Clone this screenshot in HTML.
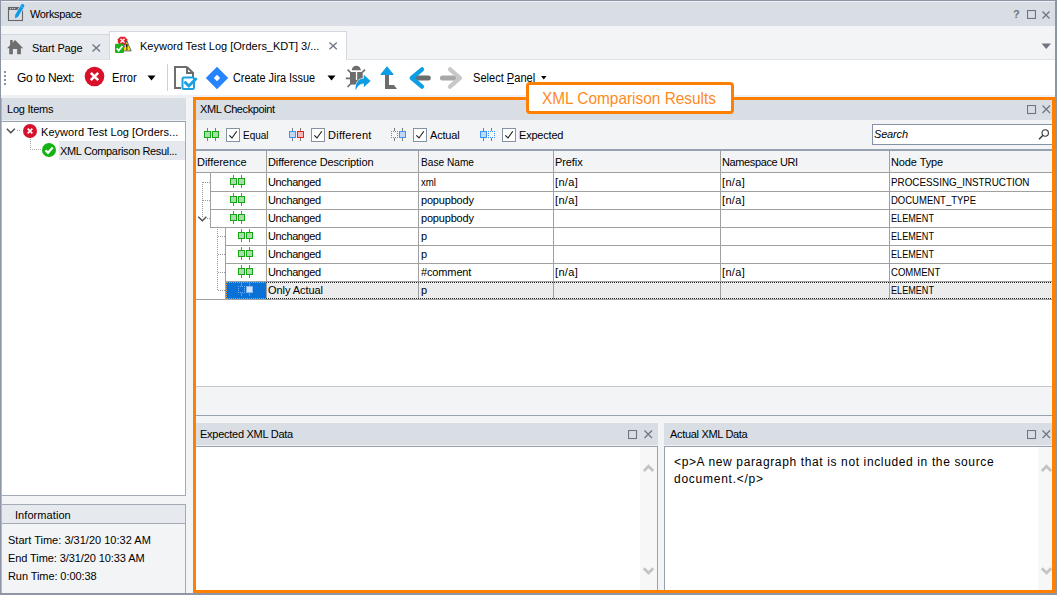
<!DOCTYPE html><html><head><meta charset="utf-8"><style>
html,body{margin:0;padding:0;}
body{width:1057px;height:595px;overflow:hidden;position:relative;font-family:"Liberation Sans",sans-serif;}
body>div,body>svg{position:absolute;}
.t{white-space:nowrap;}
</style></head><body>
<div style="left:0px;top:0px;width:1057px;height:595px;background:#f3f4f6;"></div>
<div style="left:0px;top:0px;width:1057px;height:26px;background:#d9dde4;"></div>
<div style="left:0px;top:0px;width:1057px;height:1px;background:#8e96a5;"></div>
<div style="left:1px;top:1px;width:1055px;height:1px;background:#eef0f3;"></div>
<div style="left:0px;top:26px;width:1057px;height:34px;background:#f3f4f6;"></div>
<div style="left:1px;top:34px;width:108px;height:25px;background:#e6e9ee;border-top:1px solid #d3d7de;box-sizing:border-box"></div>
<div style="left:109px;top:31px;width:238px;height:29px;background:#ffffff;border:1px solid #d5d9df;border-bottom:none;box-sizing:border-box"></div>
<div style="left:347px;top:59px;width:710px;height:1px;background:#dfe2e7;"></div>
<div style="left:1px;top:59px;width:108px;height:1px;background:#dfe2e7;"></div>
<div style="left:1px;top:60px;width:1055px;height:35px;background:#ffffff;"></div>
<div style="left:1px;top:95px;width:1055px;height:3px;background:#eef0f3;"></div>
<div style="left:0px;top:0px;width:1px;height:595px;background:#8e96a5;"></div>
<div style="left:1055px;top:0px;width:2px;height:595px;background:#8e96a5;"></div>
<div style="left:0px;top:593px;width:1057px;height:2px;background:#8e96a5;"></div>
<svg style="left:4px;top:2px" width="26" height="22" viewBox="0 0 26 22"><rect x="4.5" y="5.5" width="14" height="13" fill="none" stroke="#666" stroke-width="1.1"></rect><rect x="4" y="5" width="15" height="3" fill="#666"></rect><circle cx="6.6" cy="6.6" r=".65" fill="#ddd"></circle><circle cx="8.6" cy="6.6" r=".65" fill="#ddd"></circle><circle cx="10.6" cy="6.6" r=".65" fill="#ddd"></circle><path d="M17.54 2.32 Q19.8 1.1 20.46 4.08 L14.06 14.68 L11.1 16.6 L11.14 12.92 Z" fill="#0d9be6" stroke="#d9dde4" stroke-width="1.4"></path><path d="M17.54 2.32 Q19.8 1.1 20.46 4.08 L14.06 14.68 L11.1 16.6 L11.14 12.92 Z" fill="#0d9be6"></path><path d="M16.4 4.1 L19.5 5.9" stroke="#7cc8f0" stroke-width=".6"></path></svg>
<div class="t" style="left: 30px; top: 9px; font-size: 11px; line-height: 11px; color: rgb(0, 0, 0); letter-spacing: -0.354px;">Workspace</div>
<div class="t" style="left:1013px;top:9px;font-size:11px;line-height:11px;color:#6e7480;font-weight:bold">?</div>
<svg style="left:1027px;top:10px" width="9" height="9" viewBox="0 0 9 9"><rect x="0.5" y="0.5" width="8" height="8" fill="none" stroke="#6e7480" stroke-width="1.2"></rect></svg>
<svg style="left:1042px;top:11px" width="8" height="8" viewBox="0 0 8 8"><path d="M0.5 0.5 L7.5 7.5 M7.5 0.5 L0.5 7.5" stroke="#6e7480" stroke-width="1.3"></path></svg>
<svg style="left:4px;top:36px" width="22" height="22" viewBox="0 0 22 22"><path d="M3 12.2 L11.1 4.1 L19.2 12.2 L16.9 12.2 L16.9 18.3 L13.1 18.3 L13.1 13 L8.9 13 L8.9 18.3 L5.2 18.3 L5.2 12.2 Z" fill="#6f6f6f"></path><rect x="6.1" y="4" width="2.6" height="6" fill="#6f6f6f"></rect></svg>
<div class="t" style="left: 32px; top: 43px; font-size: 11px; line-height: 11px; color: rgb(0, 0, 0); letter-spacing: -0.143px;">Start Page</div>
<svg style="left:92px;top:44px" width="9" height="8" viewBox="0 0 9 8"><path d="M0.5 0.5 L8 7.5 M8 0.5 L0.5 7.5" stroke="#6e7480" stroke-width="1.3"></path></svg>
<svg style="left:114px;top:36px" width="18" height="18" viewBox="0 0 18 18"><path d="M6.2 0.8 L10.8 0.8 L13.2 3.2 L13.2 6.6 L10.8 9 L6.2 9 L3.8 6.6 L3.8 3.2 Z" fill="#e0202a"></path><path d="M6.5 2.7 L10.5 6.7 M10.5 2.7 L6.5 6.7" stroke="#fff" stroke-width="1.3"></path><path d="M12.8 4.8 L17.2 14.9 L8.5 14.9 Z" fill="#f8e40c" stroke="#44448a" stroke-width=".8" stroke-linejoin="round"></path><rect x="12.2" y="8" width="1.3" height="3.6" fill="#000"></rect><rect x="12.2" y="12.4" width="1.3" height="1.3" fill="#000"></rect><rect x="1" y="7.8" width="9" height="9.2" rx="1.2" fill="#1bb21b"></rect><path d="M2.7 12.2 L4.7 14.6 L8.4 10" stroke="#fff" stroke-width="1.7" fill="none"></path></svg>
<div class="t" style="left: 140px; top: 41px; font-size: 11px; line-height: 11px; color: rgb(0, 0, 0); letter-spacing: -0.004px;">Keyword Test Log [Orders_KDT] 3/...</div>
<svg style="left:329px;top:42px" width="9" height="8" viewBox="0 0 9 8"><path d="M0.5 0.5 L7.8 7.2 M7.8 0.5 L0.5 7.2" stroke="#6e7480" stroke-width="1.3"></path></svg>
<svg style="left:1041px;top:43px" width="11" height="7" viewBox="0 0 11 7"><path d="M0.5 0.5 L10 0.5 L5.25 6 Z" fill="#6e7480"></path></svg>
<div style="left:4px;top:71px;width:2px;height:2px;background:#8a8f98;"></div>
<div style="left:4px;top:75px;width:2px;height:2px;background:#8a8f98;"></div>
<div style="left:4px;top:79px;width:2px;height:2px;background:#8a8f98;"></div>
<div style="left:4px;top:83px;width:2px;height:2px;background:#8a8f98;"></div>
<div class="t" style="left: 17px; top: 72px; font-size: 12px; line-height: 12px; color: rgb(0, 0, 0); letter-spacing: -0.3px;">Go to Next:</div>
<svg style="left:84px;top:66px" width="21" height="21" viewBox="0 0 21 21"><circle cx="10.5" cy="10.5" r="9.8" fill="#d7102b"></circle><path d="M6.8 6.8 L14.2 14.2 M14.2 6.8 L6.8 14.2" stroke="#fff" stroke-width="2.6"></path></svg>
<div class="t" style="left: 112px; top: 72px; font-size: 12px; line-height: 12px; color: rgb(0, 0, 0); letter-spacing: 0px; transform-origin: 0px 0px; transform: scaleX(0.9223);">Error</div>
<svg style="left:147px;top:75px" width="9" height="6" viewBox="0 0 9 6"><path d="M0.5 0.5 L8.5 0.5 L4.5 5.5 Z" fill="#000"></path></svg>
<div style="left:167px;top:64px;width:1px;height:27px;background:#d0d0d0;"></div>
<svg style="left:172px;top:64px" width="26" height="27" viewBox="0 0 26 27"><path d="M15 3 L3 3 L3 24 L9 24" fill="none" stroke="#6d6d6d" stroke-width="2"></path><path d="M15 3 L15 9 L21 9 L21 13 M15 3 L21 9" fill="none" stroke="#6d6d6d" stroke-width="2"></path><rect x="10.5" y="13.4" width="11.5" height="11.5" rx="1.5" fill="#fff" stroke="#1ba1e2" stroke-width="2"></rect><path d="M13.3 18.5 L16.8 22 L23.8 15" stroke="#1ba1e2" stroke-width="3" fill="none" stroke-linecap="round"></path></svg>
<svg style="left:205px;top:66px" width="24" height="24" viewBox="0 0 24 24"><path d="M12 0.8 L23.2 12 L12 23.2 L0.8 12 Z" fill="#2684ff"></path><path d="M12 8.8 L15.2 12 L12 15.2 L8.8 12 Z" fill="#fff"></path></svg>
<div class="t" style="left: 233px; top: 72px; font-size: 12px; line-height: 12px; color: rgb(0, 0, 0); letter-spacing: 0px; transform-origin: 0px 0px; transform: scaleX(0.904);">Create Jira Issue</div>
<svg style="left:327px;top:75px" width="9" height="6" viewBox="0 0 9 6"><path d="M0.5 0.5 L8.5 0.5 L4.5 5.5 Z" fill="#000"></path></svg>
<svg style="left:345px;top:65px" width="27" height="27" viewBox="0 0 27 27"><path d="M6.8 5.3 A4.5 4.5 0 0 1 15.8 5.3 Z" fill="#6d6d6d"></path><rect x="5" y="7" width="12.7" height="12.6" fill="#6d6d6d"></rect><rect x="10.9" y="7" width="1.3" height="8" fill="#fff"></rect><path d="M2.6 4.6 L5.5 7.5 M20 4.6 L17.2 7.5 M0.8 13.3 L5 13.3 M2.6 22 L5.5 19" stroke="#6d6d6d" stroke-width="1.7"></path><path d="M10.6 25.6 C10.2 18 13.2 13.6 18.8 13.6 L18.8 9.8 L25.6 16 L18.8 22.2 L18.8 18.6 C15 18.6 12.6 21 10.6 25.6 Z" fill="#0c9ee5" stroke="#fff" stroke-width="1.2" paint-order="stroke"></path></svg>
<svg style="left:380px;top:66px" width="18" height="24" viewBox="0 0 18 24"><path d="M7 1 L13 8.5 L1 8.5 Z" fill="#0c9ee5" stroke="#0c9ee5" stroke-width="1.2" stroke-linejoin="round"></path><path d="M5 9 L9 9 L9 19 L14 19 L17 23 L5 23 Z" fill="#6d6d6d"></path></svg>
<svg style="left:407px;top:66px" width="26" height="24" viewBox="0 0 26 24"><path d="M10 12 L21.3 12" stroke="#6d6d6d" stroke-width="5" stroke-linecap="round"></path><path d="M15 3.3 L4.8 12 L15 20.7" fill="none" stroke="#0c9ee5" stroke-width="4.3" stroke-linecap="round" stroke-linejoin="round"></path></svg>
<svg style="left:438px;top:66px" width="26" height="24" viewBox="0 0 26 24"><path d="M4.4 12 L16 12" stroke="#a8a8a8" stroke-width="5" stroke-linecap="round"></path><path d="M12 3.3 L22 12 L12 20.7" fill="none" stroke="#c8c8c8" stroke-width="4.3" stroke-linecap="round" stroke-linejoin="round"></path></svg>
<div class="t" style="left: 473px; top: 72px; font-size: 12px; line-height: 12px; color: rgb(0, 0, 0); letter-spacing: 0px; transform-origin: 0px 0px; transform: scaleX(0.923);">Select Panel</div>
<div style="left:507px;top:83px;width:7px;height:1px;background:#000;"></div>
<svg style="left:541px;top:76px" width="6" height="4" viewBox="0 0 6 4"><path d="M0 0 L5.5 0 L2.75 3.5 Z" fill="#000"></path></svg>
<div style="left:1px;top:98px;width:185px;height:22px;background:#d9dde4;"></div>
<div class="t" style="left: 7px; top: 104px; font-size: 11px; line-height: 11px; color: rgb(0, 0, 0); letter-spacing: -0.227px;">Log Items</div>
<div style="left:1px;top:120px;width:185px;height:1px;background:#eef0f3;"></div>
<div style="left:1px;top:121px;width:185px;height:1px;background:#98a1af;"></div>
<div style="left:1px;top:122px;width:185px;height:374px;background:#ffffff;border-right:1px solid #a3aab6;border-bottom:1px solid #a3aab6;box-sizing:border-box"></div>
<svg style="left:6px;top:128px" width="10" height="7" viewBox="0 0 10 7"><path d="M0.8 0.8 L4.8 4.8 L8.8 0.8" fill="none" stroke="#4a4a4a" stroke-width="1.4"></path></svg>
<svg style="left:16px;top:129px" width="6" height="3" viewBox="0 0 6 3"><rect x="1" y="1" width="1" height="1" fill="#aaa"></rect><rect x="3" y="1" width="1" height="1" fill="#aaa"></rect></svg>
<svg style="left:23px;top:124px" width="15" height="15" viewBox="0 0 15 15"><circle cx="7" cy="7" r="7" fill="#d7102b"></circle><path d="M4.7 4.7 L9.3 9.3 M9.3 4.7 L4.7 9.3" stroke="#fff" stroke-width="1.7"></path></svg>
<div class="t" style="left: 41px; top: 127px; font-size: 11px; line-height: 11px; color: rgb(0, 0, 0); letter-spacing: 0.045px;">Keyword Test Log [Orders...</div>
<svg style="left:29px;top:138px" width="13" height="13" viewBox="0 0 13 13"><path d="M1.5 1 V11.5 H12" fill="none" stroke="#aaa" stroke-width="1" stroke-dasharray="1 1"></path></svg>
<div style="left:59px;top:141px;width:126px;height:19px;background:#e5e8ec;"></div>
<svg style="left:42px;top:143px" width="15" height="15" viewBox="0 0 15 15"><circle cx="7" cy="7" r="7" fill="#12b312"></circle><path d="M3.5 7.3 L6 9.8 L10.7 4.6" stroke="#fff" stroke-width="2.2" fill="none"></path></svg>
<div class="t" style="left: 60px; top: 146px; font-size: 11px; line-height: 11px; color: rgb(0, 0, 0); letter-spacing: -0.342px;">XML Comparison Resul...</div>
<div style="left:1px;top:504px;width:185px;height:20px;background:#e6e9ee;border-top:1px solid #a3aab6;border-right:1px solid #a3aab6;border-bottom:1px solid #a3aab6;box-sizing:border-box"></div>
<div style="left:1px;top:524px;width:185px;height:69px;background:#f3f4f6;border-right:1px solid #a3aab6;box-sizing:border-box"></div>
<div class="t" style="left: 15px; top: 510px; font-size: 11px; line-height: 11px; color: rgb(0, 0, 0); letter-spacing: 0.067px;">Information</div>
<div class="t" style="left: 8px; top: 535px; font-size: 11px; line-height: 11px; color: rgb(0, 0, 0); letter-spacing: 0.012px;">Start Time: 3/31/20 10:32 AM</div>
<div class="t" style="left: 8px; top: 553px; font-size: 11px; line-height: 11px; color: rgb(0, 0, 0); letter-spacing: -0.085px;">End Time: 3/31/20 10:33 AM</div>
<div class="t" style="left: 8px; top: 571px; font-size: 11px; line-height: 11px; color: rgb(0, 0, 0); letter-spacing: -0.081px;">Run Time: 0:00:38</div>
<div style="left:1px;top:98px;width:1px;height:495px;background:#b4bac5;"></div>
<div style="left:196px;top:100px;width:856px;height:20px;background:#d9dde4;"></div>
<div class="t" style="left: 200px; top: 104px; font-size: 11px; line-height: 11px; color: rgb(0, 0, 0); letter-spacing: -0.409px;">XML Checkpoint</div>
<svg style="left:1027px;top:105px" width="10" height="10" viewBox="0 0 10 10"><rect x="0.5" y="0.5" width="8" height="8" fill="none" stroke="#6e7480" stroke-width="1.1"></rect></svg>
<svg style="left:1042px;top:105px" width="9" height="9" viewBox="0 0 9 9"><path d="M0.5 0.5 L8 8 M8 0.5 L0.5 8" stroke="#6e7480" stroke-width="1.2"></path></svg>
<div style="left:196px;top:120px;width:856px;height:29px;background:#f3f4f6;"></div>
<svg style="left:204px;top:128px" width="15" height="13" viewBox="0 0 15 13"><rect x="3" y="0" width="1" height="13" fill="#7a7a7a"></rect><rect x="11" y="0" width="1" height="13" fill="#7a7a7a"></rect><rect x="0.5" y="3.5" width="6" height="6" fill="#a8dca8" stroke="#14a814" stroke-width="1"></rect><rect x="8.5" y="3.5" width="6" height="6" fill="#a8dca8" stroke="#14a814" stroke-width="1"></rect></svg>
<svg style="left:226px;top:128px" width="14" height="14" viewBox="0 0 14 14"><rect x="0.5" y="0.5" width="13" height="13" fill="#fff" stroke="#8592a6" stroke-width="1"></rect><path d="M3.3 7.3 L6 10 L10.8 3.2" fill="none" stroke="#1a1a1a" stroke-width="1.1"></path></svg>
<div class="t" style="left: 243px; top: 130px; font-size: 11px; line-height: 11px; color: rgb(0, 0, 0); letter-spacing: 0px; transform-origin: 0px 0px; transform: scaleX(0.9097);">Equal</div>
<svg style="left:289px;top:128px" width="15" height="13" viewBox="0 0 15 13"><rect x="3" y="0" width="1" height="13" fill="#7a7a7a"></rect><rect x="11" y="0" width="1" height="13" fill="#7a7a7a"></rect><rect x="0.5" y="3.5" width="6" height="6" fill="#c0d8f4" stroke="#3a96ff" stroke-width="1"></rect><rect x="8.5" y="3.5" width="6" height="6" fill="#f4b8b8" stroke="#ee1c24" stroke-width="1"></rect></svg>
<svg style="left:311px;top:128px" width="14" height="14" viewBox="0 0 14 14"><rect x="0.5" y="0.5" width="13" height="13" fill="#fff" stroke="#8592a6" stroke-width="1"></rect><path d="M3.3 7.3 L6 10 L10.8 3.2" fill="none" stroke="#1a1a1a" stroke-width="1.1"></path></svg>
<div class="t" style="left: 328px; top: 130px; font-size: 11px; line-height: 11px; color: rgb(0, 0, 0); letter-spacing: 0.253px;">Different</div>
<svg style="left:391px;top:128px" width="15" height="13" viewBox="0 0 15 13"><rect x="3" y="0" width="1" height="13" fill="#7a7a7a"></rect><rect x="11" y="0" width="1" height="13" fill="#7a7a7a"></rect><rect x="0" y="3" width="7" height="7" fill="#f3f4f6"></rect><rect x="0" y="3" width="1" height="1" fill="#3a96ff"></rect><rect x="2" y="3" width="1" height="1" fill="#3a96ff"></rect><rect x="4" y="3" width="1" height="1" fill="#3a96ff"></rect><rect x="6" y="3" width="1" height="1" fill="#3a96ff"></rect><rect x="0" y="5" width="1" height="1" fill="#3a96ff"></rect><rect x="6" y="5" width="1" height="1" fill="#3a96ff"></rect><rect x="0" y="7" width="1" height="1" fill="#3a96ff"></rect><rect x="6" y="7" width="1" height="1" fill="#3a96ff"></rect><rect x="0" y="9" width="1" height="1" fill="#3a96ff"></rect><rect x="2" y="9" width="1" height="1" fill="#3a96ff"></rect><rect x="4" y="9" width="1" height="1" fill="#3a96ff"></rect><rect x="6" y="9" width="1" height="1" fill="#3a96ff"></rect><rect x="8.5" y="3.5" width="6" height="6" fill="#c0d8f4" stroke="#3a96ff" stroke-width="1"></rect></svg>
<svg style="left:413px;top:128px" width="14" height="14" viewBox="0 0 14 14"><rect x="0.5" y="0.5" width="13" height="13" fill="#fff" stroke="#8592a6" stroke-width="1"></rect><path d="M3.3 7.3 L6 10 L10.8 3.2" fill="none" stroke="#1a1a1a" stroke-width="1.1"></path></svg>
<div class="t" style="left: 430px; top: 130px; font-size: 11px; line-height: 11px; color: rgb(0, 0, 0); letter-spacing: -0.176px;">Actual</div>
<svg style="left:480px;top:128px" width="15" height="13" viewBox="0 0 15 13"><rect x="3" y="0" width="1" height="13" fill="#7a7a7a"></rect><rect x="11" y="0" width="1" height="13" fill="#7a7a7a"></rect><rect x="0.5" y="3.5" width="6" height="6" fill="#c0d8f4" stroke="#3a96ff" stroke-width="1"></rect><rect x="8" y="3" width="7" height="7" fill="#f3f4f6"></rect><rect x="8" y="3" width="1" height="1" fill="#3a96ff"></rect><rect x="10" y="3" width="1" height="1" fill="#3a96ff"></rect><rect x="12" y="3" width="1" height="1" fill="#3a96ff"></rect><rect x="14" y="3" width="1" height="1" fill="#3a96ff"></rect><rect x="8" y="5" width="1" height="1" fill="#3a96ff"></rect><rect x="14" y="5" width="1" height="1" fill="#3a96ff"></rect><rect x="8" y="7" width="1" height="1" fill="#3a96ff"></rect><rect x="14" y="7" width="1" height="1" fill="#3a96ff"></rect><rect x="8" y="9" width="1" height="1" fill="#3a96ff"></rect><rect x="10" y="9" width="1" height="1" fill="#3a96ff"></rect><rect x="12" y="9" width="1" height="1" fill="#3a96ff"></rect><rect x="14" y="9" width="1" height="1" fill="#3a96ff"></rect></svg>
<svg style="left:502px;top:128px" width="14" height="14" viewBox="0 0 14 14"><rect x="0.5" y="0.5" width="13" height="13" fill="#fff" stroke="#8592a6" stroke-width="1"></rect><path d="M3.3 7.3 L6 10 L10.8 3.2" fill="none" stroke="#1a1a1a" stroke-width="1.1"></path></svg>
<div class="t" style="left: 519px; top: 130px; font-size: 11px; line-height: 11px; color: rgb(0, 0, 0); letter-spacing: -0.196px;">Expected</div>
<div style="left:872px;top:124px;width:180px;height:21px;background:#ffffff;border:1px solid #8592a6;border-right:none;box-sizing:border-box"></div>
<div class="t" style="left: 874px; top: 129px; font-size: 11px; line-height: 11px; color: rgb(0, 0, 0); font-style: italic; letter-spacing: -0.172px;">Search</div>
<svg style="left:1038px;top:129px" width="12" height="11" viewBox="0 0 12 11"><circle cx="7.2" cy="4" r="3.2" fill="none" stroke="#333" stroke-width="1.1"></circle><path d="M5 6.3 L1 10.2" stroke="#333" stroke-width="1.5"></path></svg>
<div style="left:196px;top:149px;width:856px;height:2px;background:#98a1af;"></div>
<div style="left:196px;top:151px;width:856px;height:21px;background:#f3f4f6;"></div>
<div style="left:196px;top:172px;width:856px;height:1px;background:#a0a0a0;"></div>
<div style="left:266px;top:151px;width:1px;height:148px;background:#a0a0a0;"></div>
<div style="left:418px;top:151px;width:1px;height:148px;background:#a0a0a0;"></div>
<div style="left:553px;top:151px;width:1px;height:148px;background:#a0a0a0;"></div>
<div style="left:720px;top:151px;width:1px;height:148px;background:#a0a0a0;"></div>
<div style="left:889px;top:151px;width:1px;height:148px;background:#a0a0a0;"></div>
<div class="t" style="left: 197px; top: 157px; font-size: 11px; line-height: 11px; color: rgb(0, 0, 0); letter-spacing: -0.037px;">Difference</div>
<div class="t" style="left: 268px; top: 157px; font-size: 11px; line-height: 11px; color: rgb(0, 0, 0); letter-spacing: -0.12px;">Difference Description</div>
<div class="t" style="left: 421px; top: 157px; font-size: 11px; line-height: 11px; color: rgb(0, 0, 0); letter-spacing: 0px; transform-origin: 0px 0px; transform: scaleX(0.922);">Base Name</div>
<div class="t" style="left: 555px; top: 157px; font-size: 11px; line-height: 11px; color: rgb(0, 0, 0); letter-spacing: -0.085px;">Prefix</div>
<div class="t" style="left: 722px; top: 157px; font-size: 11px; line-height: 11px; color: rgb(0, 0, 0); letter-spacing: -0.384px;">Namespace URI</div>
<div class="t" style="left: 891px; top: 157px; font-size: 11px; line-height: 11px; color: rgb(0, 0, 0); letter-spacing: -0.102px;">Node Type</div>
<div style="left:196px;top:173px;width:856px;height:213px;background:#ffffff;"></div>
<div style="left:196px;top:172px;width:856px;height:1px;background:#a0a0a0;"></div>
<div style="left:266px;top:173px;width:1px;height:19px;background:#a0a0a0;"></div>
<div style="left:418px;top:173px;width:1px;height:19px;background:#a0a0a0;"></div>
<div style="left:553px;top:173px;width:1px;height:19px;background:#a0a0a0;"></div>
<div style="left:720px;top:173px;width:1px;height:19px;background:#a0a0a0;"></div>
<div style="left:889px;top:173px;width:1px;height:19px;background:#a0a0a0;"></div>
<div style="left:210px;top:191px;width:842px;height:1px;background:#a0a0a0;"></div>
<div style="left:210px;top:173px;width:1px;height:19px;background:#a0a0a0;"></div>
<svg style="left:230px;top:175px" width="15" height="13" viewBox="0 0 15 13"><rect x="3" y="0" width="1" height="13" fill="#7a7a7a"></rect><rect x="11" y="0" width="1" height="13" fill="#7a7a7a"></rect><rect x="0.5" y="3.5" width="6" height="6" fill="#a8dca8" stroke="#14a814"></rect><rect x="8.5" y="3.5" width="6" height="6" fill="#a8dca8" stroke="#14a814"></rect></svg>
<div class="t" style="left: 268px; top: 177px; font-size: 11px; line-height: 11px; color: rgb(0, 0, 0); letter-spacing: -0.385px;">Unchanged</div>
<div class="t" style="left: 421px; top: 177px; font-size: 11px; line-height: 11px; color: rgb(0, 0, 0); letter-spacing: 0px; transform-origin: 0px 0px; transform: scaleX(0.8767);">xml</div>
<div class="t" style="left: 555px; top: 177px; font-size: 11px; line-height: 11px; color: rgb(0, 0, 0); letter-spacing: 0.323px;">[n/a]</div>
<div class="t" style="left: 722px; top: 177px; font-size: 11px; line-height: 11px; color: rgb(0, 0, 0); letter-spacing: 0.323px;">[n/a]</div>
<div class="t" style="left: 891px; top: 177px; font-size: 11px; line-height: 11px; color: rgb(0, 0, 0); letter-spacing: 0px; transform-origin: 0px 0px; transform: scaleX(0.8956);">PROCESSING_INSTRUCTION</div>
<div style="left:266px;top:191px;width:1px;height:19px;background:#a0a0a0;"></div>
<div style="left:418px;top:191px;width:1px;height:19px;background:#a0a0a0;"></div>
<div style="left:553px;top:191px;width:1px;height:19px;background:#a0a0a0;"></div>
<div style="left:720px;top:191px;width:1px;height:19px;background:#a0a0a0;"></div>
<div style="left:889px;top:191px;width:1px;height:19px;background:#a0a0a0;"></div>
<div style="left:210px;top:209px;width:842px;height:1px;background:#a0a0a0;"></div>
<div style="left:210px;top:191px;width:1px;height:19px;background:#a0a0a0;"></div>
<svg style="left:230px;top:193px" width="15" height="13" viewBox="0 0 15 13"><rect x="3" y="0" width="1" height="13" fill="#7a7a7a"></rect><rect x="11" y="0" width="1" height="13" fill="#7a7a7a"></rect><rect x="0.5" y="3.5" width="6" height="6" fill="#a8dca8" stroke="#14a814"></rect><rect x="8.5" y="3.5" width="6" height="6" fill="#a8dca8" stroke="#14a814"></rect></svg>
<div class="t" style="left: 268px; top: 195px; font-size: 11px; line-height: 11px; color: rgb(0, 0, 0); letter-spacing: -0.385px;">Unchanged</div>
<div class="t" style="left: 421px; top: 195px; font-size: 11px; line-height: 11px; color: rgb(0, 0, 0); letter-spacing: -0.182px;">popupbody</div>
<div class="t" style="left: 555px; top: 195px; font-size: 11px; line-height: 11px; color: rgb(0, 0, 0); letter-spacing: 0.323px;">[n/a]</div>
<div class="t" style="left: 722px; top: 195px; font-size: 11px; line-height: 11px; color: rgb(0, 0, 0); letter-spacing: 0.323px;">[n/a]</div>
<div class="t" style="left: 891px; top: 195px; font-size: 11px; line-height: 11px; color: rgb(0, 0, 0); letter-spacing: 0px; transform-origin: 0px 0px; transform: scaleX(0.8638);">DOCUMENT_TYPE</div>
<div style="left:266px;top:209px;width:1px;height:19px;background:#a0a0a0;"></div>
<div style="left:418px;top:209px;width:1px;height:19px;background:#a0a0a0;"></div>
<div style="left:553px;top:209px;width:1px;height:19px;background:#a0a0a0;"></div>
<div style="left:720px;top:209px;width:1px;height:19px;background:#a0a0a0;"></div>
<div style="left:889px;top:209px;width:1px;height:19px;background:#a0a0a0;"></div>
<div style="left:210px;top:227px;width:842px;height:1px;background:#a0a0a0;"></div>
<div style="left:210px;top:209px;width:1px;height:19px;background:#a0a0a0;"></div>
<svg style="left:230px;top:211px" width="15" height="13" viewBox="0 0 15 13"><rect x="3" y="0" width="1" height="13" fill="#7a7a7a"></rect><rect x="11" y="0" width="1" height="13" fill="#7a7a7a"></rect><rect x="0.5" y="3.5" width="6" height="6" fill="#a8dca8" stroke="#14a814"></rect><rect x="8.5" y="3.5" width="6" height="6" fill="#a8dca8" stroke="#14a814"></rect></svg>
<div class="t" style="left: 268px; top: 213px; font-size: 11px; line-height: 11px; color: rgb(0, 0, 0); letter-spacing: -0.385px;">Unchanged</div>
<div class="t" style="left: 421px; top: 213px; font-size: 11px; line-height: 11px; color: rgb(0, 0, 0); letter-spacing: -0.182px;">popupbody</div>
<div class="t" style="left: 891px; top: 213px; font-size: 11px; line-height: 11px; color: rgb(0, 0, 0); letter-spacing: 0px; transform-origin: 0px 0px; transform: scaleX(0.8274);">ELEMENT</div>
<div style="left:266px;top:227px;width:1px;height:19px;background:#a0a0a0;"></div>
<div style="left:418px;top:227px;width:1px;height:19px;background:#a0a0a0;"></div>
<div style="left:553px;top:227px;width:1px;height:19px;background:#a0a0a0;"></div>
<div style="left:720px;top:227px;width:1px;height:19px;background:#a0a0a0;"></div>
<div style="left:889px;top:227px;width:1px;height:19px;background:#a0a0a0;"></div>
<div style="left:225px;top:245px;width:827px;height:1px;background:#a0a0a0;"></div>
<div style="left:225px;top:227px;width:1px;height:19px;background:#a0a0a0;"></div>
<svg style="left:238px;top:229px" width="15" height="13" viewBox="0 0 15 13"><rect x="3" y="0" width="1" height="13" fill="#7a7a7a"></rect><rect x="11" y="0" width="1" height="13" fill="#7a7a7a"></rect><rect x="0.5" y="3.5" width="6" height="6" fill="#a8dca8" stroke="#14a814"></rect><rect x="8.5" y="3.5" width="6" height="6" fill="#a8dca8" stroke="#14a814"></rect></svg>
<div class="t" style="left: 268px; top: 231px; font-size: 11px; line-height: 11px; color: rgb(0, 0, 0); letter-spacing: -0.385px;">Unchanged</div>
<div class="t" style="left:421px;top:231px;font-size:11px;line-height:11px;color:#000;">p</div>
<div class="t" style="left: 891px; top: 231px; font-size: 11px; line-height: 11px; color: rgb(0, 0, 0); letter-spacing: 0px; transform-origin: 0px 0px; transform: scaleX(0.8274);">ELEMENT</div>
<div style="left:266px;top:245px;width:1px;height:19px;background:#a0a0a0;"></div>
<div style="left:418px;top:245px;width:1px;height:19px;background:#a0a0a0;"></div>
<div style="left:553px;top:245px;width:1px;height:19px;background:#a0a0a0;"></div>
<div style="left:720px;top:245px;width:1px;height:19px;background:#a0a0a0;"></div>
<div style="left:889px;top:245px;width:1px;height:19px;background:#a0a0a0;"></div>
<div style="left:225px;top:263px;width:827px;height:1px;background:#a0a0a0;"></div>
<div style="left:225px;top:245px;width:1px;height:19px;background:#a0a0a0;"></div>
<svg style="left:238px;top:247px" width="15" height="13" viewBox="0 0 15 13"><rect x="3" y="0" width="1" height="13" fill="#7a7a7a"></rect><rect x="11" y="0" width="1" height="13" fill="#7a7a7a"></rect><rect x="0.5" y="3.5" width="6" height="6" fill="#a8dca8" stroke="#14a814"></rect><rect x="8.5" y="3.5" width="6" height="6" fill="#a8dca8" stroke="#14a814"></rect></svg>
<div class="t" style="left: 268px; top: 249px; font-size: 11px; line-height: 11px; color: rgb(0, 0, 0); letter-spacing: -0.385px;">Unchanged</div>
<div class="t" style="left:421px;top:249px;font-size:11px;line-height:11px;color:#000;">p</div>
<div class="t" style="left: 891px; top: 249px; font-size: 11px; line-height: 11px; color: rgb(0, 0, 0); letter-spacing: 0px; transform-origin: 0px 0px; transform: scaleX(0.8274);">ELEMENT</div>
<div style="left:266px;top:263px;width:1px;height:19px;background:#a0a0a0;"></div>
<div style="left:418px;top:263px;width:1px;height:19px;background:#a0a0a0;"></div>
<div style="left:553px;top:263px;width:1px;height:19px;background:#a0a0a0;"></div>
<div style="left:720px;top:263px;width:1px;height:19px;background:#a0a0a0;"></div>
<div style="left:889px;top:263px;width:1px;height:19px;background:#a0a0a0;"></div>
<div style="left:225px;top:281px;width:827px;height:1px;background:#a0a0a0;"></div>
<div style="left:225px;top:263px;width:1px;height:19px;background:#a0a0a0;"></div>
<svg style="left:238px;top:265px" width="15" height="13" viewBox="0 0 15 13"><rect x="3" y="0" width="1" height="13" fill="#7a7a7a"></rect><rect x="11" y="0" width="1" height="13" fill="#7a7a7a"></rect><rect x="0.5" y="3.5" width="6" height="6" fill="#a8dca8" stroke="#14a814"></rect><rect x="8.5" y="3.5" width="6" height="6" fill="#a8dca8" stroke="#14a814"></rect></svg>
<div class="t" style="left: 268px; top: 267px; font-size: 11px; line-height: 11px; color: rgb(0, 0, 0); letter-spacing: -0.385px;">Unchanged</div>
<div class="t" style="left: 421px; top: 267px; font-size: 11px; line-height: 11px; color: rgb(0, 0, 0); letter-spacing: -0.137px;">#comment</div>
<div class="t" style="left: 555px; top: 267px; font-size: 11px; line-height: 11px; color: rgb(0, 0, 0); letter-spacing: 0.323px;">[n/a]</div>
<div class="t" style="left: 722px; top: 267px; font-size: 11px; line-height: 11px; color: rgb(0, 0, 0); letter-spacing: 0.323px;">[n/a]</div>
<div class="t" style="left: 891px; top: 267px; font-size: 11px; line-height: 11px; color: rgb(0, 0, 0); letter-spacing: 0px; transform-origin: 0px 0px; transform: scaleX(0.8675);">COMMENT</div>
<div style="left:266px;top:281px;width:1px;height:19px;background:#a0a0a0;"></div>
<div style="left:418px;top:281px;width:1px;height:19px;background:#a0a0a0;"></div>
<div style="left:553px;top:281px;width:1px;height:19px;background:#a0a0a0;"></div>
<div style="left:720px;top:281px;width:1px;height:19px;background:#a0a0a0;"></div>
<div style="left:889px;top:281px;width:1px;height:19px;background:#a0a0a0;"></div>
<div style="left:225px;top:299px;width:827px;height:1px;background:#a0a0a0;"></div>
<div style="left:225px;top:281px;width:1px;height:19px;background:#a0a0a0;"></div>
<div style="left:266px;top:282px;width:786px;height:17px;background:#ececec;"></div>
<div style="left:266px;top:281px;width:1px;height:19px;background:#a0a0a0;"></div>
<div style="left:418px;top:281px;width:1px;height:19px;background:#a0a0a0;"></div>
<div style="left:553px;top:281px;width:1px;height:19px;background:#a0a0a0;"></div>
<div style="left:720px;top:281px;width:1px;height:19px;background:#a0a0a0;"></div>
<div style="left:889px;top:281px;width:1px;height:19px;background:#a0a0a0;"></div>
<div style="left:266px;top:282px;width:786px;height:1px;background:#000;background:repeating-linear-gradient(90deg,#222 0 1px,transparent 1px 2px)"></div>
<div style="left:266px;top:298px;width:786px;height:1px;background:#000;background:repeating-linear-gradient(90deg,#222 0 1px,transparent 1px 2px)"></div>
<div style="left:226px;top:282px;width:40px;height:17px;background:#0a72d6;"></div>
<div style="left:226px;top:282px;width:40px;height:17px;box-sizing:border-box;border:1px dotted #f0962a;border-right:none"></div>
<svg style="left:238px;top:283px" width="15" height="13" viewBox="0 0 15 13"><rect x="3" y="0" width="1" height="3" fill="#9a8c78"></rect><rect x="3" y="10" width="1" height="3" fill="#9a8c78"></rect><rect x="11" y="0" width="1" height="3" fill="#9a8c78"></rect><rect x="11" y="10" width="1" height="3" fill="#9a8c78"></rect><path d="M0 3h1M2 3h1M4 3h1M6 3h1M0 9h1M2 9h1M4 9h1M6 9h1M0 5h1M0 7h1M6 5h1M6 7h1" stroke="#74aef0" stroke-width="1" transform="translate(0,0.5)"></path><rect x="8.5" y="3.5" width="6" height="6" fill="#d2e3f6" stroke="#7fb6f6"></rect></svg>
<div class="t" style="left: 268px; top: 285px; font-size: 11px; line-height: 11px; color: rgb(0, 0, 0); letter-spacing: -0.064px;">Only Actual</div>
<div class="t" style="left:421px;top:285px;font-size:11px;line-height:11px;color:#000;">p</div>
<div class="t" style="left: 891px; top: 285px; font-size: 11px; line-height: 11px; color: rgb(0, 0, 0); letter-spacing: 0px; transform-origin: 0px 0px; transform: scaleX(0.8274);">ELEMENT</div>
<div style="left:196px;top:299px;width:856px;height:1px;background:#a0a0a0;"></div>
<svg style="left:196px;top:173px" width="40" height="126" viewBox="0 0 40 126"><path d="M6.5 9 V45" stroke="#999" stroke-width="1" stroke-dasharray="1 1" fill="none"></path><path d="M7 9.5 H14 M7 27.5 H14 M11 45.5 H14" stroke="#999" stroke-width="1" stroke-dasharray="1 1" fill="none"></path><path d="M21.5 54 V117" stroke="#999" stroke-width="1" stroke-dasharray="1 1" fill="none"></path><path d="M22 63.5 H29 M22 81.5 H29 M22 99.5 H29 M22 117.5 H29" stroke="#999" stroke-width="1" stroke-dasharray="1 1" fill="none"></path><path d="M2.3 43.8 L6.3 47.8 L10.3 43.8" fill="none" stroke="#4a4a4a" stroke-width="1.3"></path></svg>
<div style="left:196px;top:386px;width:856px;height:1px;background:#c8c8c8;"></div>
<div style="left:196px;top:387px;width:856px;height:28px;background:#f3f4f6;"></div>
<div style="left:196px;top:415px;width:856px;height:1px;background:#98a1af;"></div>
<div style="left:196px;top:416px;width:856px;height:7px;background:#f3f4f6;"></div>
<div style="left:196px;top:423px;width:462px;height:22px;background:#d9dde4;"></div>
<div style="left:196px;top:445px;width:462px;height:1px;background:#eef0f3;"></div>
<div class="t" style="left: 200px; top: 429px; font-size: 11px; line-height: 11px; color: rgb(0, 0, 0); letter-spacing: -0.264px;">Expected XML Data</div>
<svg style="left:628px;top:430px" width="10" height="10" viewBox="0 0 10 10"><rect x="0.5" y="0.5" width="8" height="8" fill="none" stroke="#6e7480" stroke-width="1.1"></rect></svg>
<svg style="left:644px;top:430px" width="9" height="9" viewBox="0 0 9 9"><path d="M0.5 0.5 L8 8 M8 0.5 L0.5 8" stroke="#6e7480" stroke-width="1.2"></path></svg>
<div style="left:196px;top:446px;width:462px;height:1px;background:#98a1af;"></div>
<div style="left:196px;top:447px;width:461px;height:143px;background:#ffffff;"></div>
<div style="left:657px;top:446px;width:1px;height:144px;background:#98a1af;"></div>
<div style="left:640px;top:447px;width:17px;height:143px;background:#f7f7f7;"></div>
<svg style="left:642px;top:462px" width="13" height="11" viewBox="0 0 13 11"><path d="M1.8 9 L6.5 4.2 L11.2 9" fill="none" stroke="#c4c4c4" stroke-width="2.8"></path></svg>
<svg style="left:642px;top:566px" width="13" height="11" viewBox="0 0 13 11"><path d="M1.8 2.2 L6.5 7 L11.2 2.2" fill="none" stroke="#c4c4c4" stroke-width="2.8"></path></svg>
<div style="left:658px;top:416px;width:6px;height:174px;background:#f3f4f6;"></div>
<div style="left:664px;top:423px;width:388px;height:22px;background:#d9dde4;"></div>
<div style="left:664px;top:445px;width:388px;height:1px;background:#eef0f3;"></div>
<div class="t" style="left: 670px; top: 429px; font-size: 11px; line-height: 11px; color: rgb(0, 0, 0); letter-spacing: -0.317px;">Actual XML Data</div>
<svg style="left:1027px;top:430px" width="10" height="10" viewBox="0 0 10 10"><rect x="0.5" y="0.5" width="8" height="8" fill="none" stroke="#6e7480" stroke-width="1.1"></rect></svg>
<svg style="left:1042px;top:430px" width="9" height="9" viewBox="0 0 9 9"><path d="M0.5 0.5 L8 8 M8 0.5 L0.5 8" stroke="#6e7480" stroke-width="1.2"></path></svg>
<div style="left:664px;top:446px;width:388px;height:1px;background:#98a1af;"></div>
<div style="left:664px;top:446px;width:1px;height:144px;background:#98a1af;"></div>
<div style="left:665px;top:447px;width:387px;height:143px;background:#ffffff;"></div>
<div style="left:1038px;top:447px;width:17px;height:143px;background:#f7f7f7;"></div>
<svg style="left:1040px;top:462px" width="13" height="11" viewBox="0 0 13 11"><path d="M1.8 9 L6.5 4.2 L11.2 9" fill="none" stroke="#c4c4c4" stroke-width="2.8"></path></svg>
<svg style="left:1040px;top:566px" width="13" height="11" viewBox="0 0 13 11"><path d="M1.8 2.2 L6.5 7 L11.2 2.2" fill="none" stroke="#c4c4c4" stroke-width="2.8"></path></svg>
<div class="t" style="left: 674px; top: 456px; font-size: 12px; line-height: 12px; color: rgb(0, 0, 0); letter-spacing: 0.629px;">&lt;p&gt;A new paragraph that is not included in the source</div>
<div class="t" style="left: 674px; top: 473px; font-size: 12px; line-height: 12px; color: rgb(0, 0, 0); letter-spacing: 0.745px;">document.&lt;/p&gt;</div>
<div style="left:193px;top:97px;width:862px;height:496px;box-sizing:border-box;border:3px solid #ff7f00"></div>
<div style="left:526px;top:82px;width:208px;height:32px;box-sizing:border-box;border:3px solid #ff7f00;border-radius:4px;background:#fff"></div>
<div class="t" style="left: 542px; top: 90px; font-size: 16.5px; line-height: 16.5px; color: rgb(255, 138, 36); letter-spacing: 0px; transform-origin: 0px 0px; transform: scaleX(0.9331);">XML Comparison Results</div>
</body></html>
